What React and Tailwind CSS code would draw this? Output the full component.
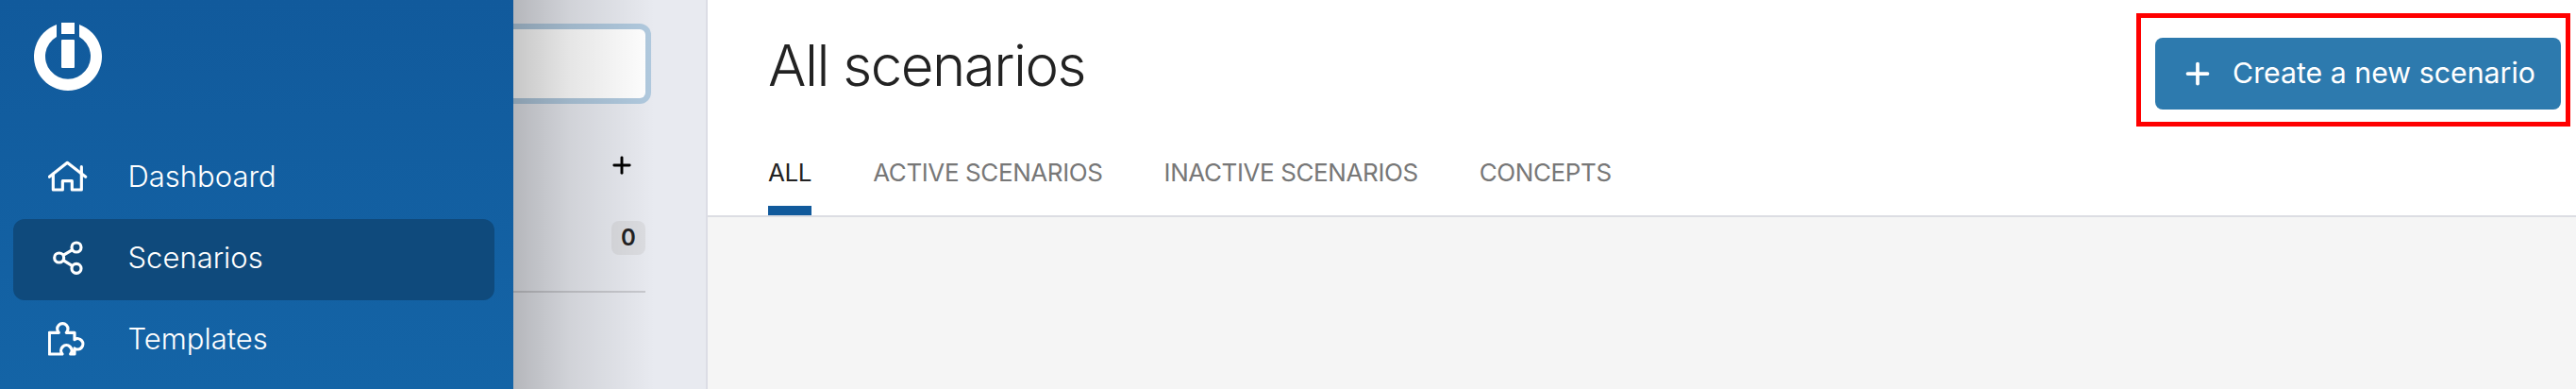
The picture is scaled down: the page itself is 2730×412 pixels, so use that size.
import React from "react";
import { Plus } from "lucide-react";

function Logo() {
  return (
    <svg width="72" height="72" viewBox="0 0 72 72" fill="#fff">
      <path
        fillRule="evenodd"
        d="M24 2A36 36 0 1 0 48 2V14.9A24 24 0 1 1 24 14.9Z"
      />
      <rect x="29" y="0" width="14" height="12" />
      <rect x="29" y="18" width="14" height="30" rx="1" />
    </svg>
  );
}

function HomeIcon() {
  return (
    <svg width="42" height="34" viewBox="66 65 126 102" fill="none" stroke="#fff" strokeWidth="9.5" strokeLinejoin="round" strokeLinecap="round">
      <path d="M70 117L127 72L185 117" />
      <path d="M172 85V158H142V130H112V158H82V107" />
    </svg>
  );
}

function ShareIcon() {
  return (
    <svg width="32" height="36" viewBox="80 319 96 108" fill="none" stroke="#fff" strokeWidth="9.5">
      <circle cx="155" cy="340" r="15" />
      <circle cx="100" cy="373" r="15" />
      <circle cx="155" cy="407" r="15" />
      <path d="M113 365L142 348M113 381L142 399" />
    </svg>
  );
}

function PuzzleIcon() {
  return (
    <svg width="42" height="36" viewBox="66 578 126 108" fill="none" stroke="#fff" strokeWidth="9.5" strokeLinejoin="round">
      <path d="M70 680V612H100A17 17 0 1 1 124 612H150V634A17 17 0 1 1 150 662V680H137A17 17 0 1 0 111 680H70Z" />
    </svg>
  );
}

const navItems = [
  { label: "Dashboard", icon: <HomeIcon /> },
  { label: "Scenarios", icon: <ShareIcon />, active: true },
  { label: "Templates", icon: <PuzzleIcon /> },
];

const tabs = ["All", "Active scenarios", "Inactive scenarios", "Concepts"];

function App() {
  return (
    <div className="flex h-[412px] w-[2730px] overflow-hidden bg-white font-['Inter',sans-serif]">
      <div className="w-[544px] shrink-0 bg-gradient-to-b from-[#115a9c] to-[#1464a6]">
        <div className="pl-9 pt-6">
          <Logo />
        </div>
        <div className="mt-[50px] flex flex-col">
          {navItems.map((item) => (
            <div
              key={item.label}
              className={`mx-[14px] flex h-[86px] w-[510px] items-center rounded-xl pb-1 text-[31px] font-light text-white ${
                item.active ? "bg-[#0f4a7c]" : ""
              }`}
            >
              <div className="mr-[5.5px] flex w-[116px] justify-center">{item.icon}</div>
              {item.label}
            </div>
          ))}
        </div>
      </div>

      <div className="relative w-[206px] shrink-0 border-r-2 border-[#dcdde5] bg-[#e8eaf0] pr-[58px] pt-[25px]">
        <div className="h-[85px] rounded-r-xl border-y-[6px] border-r-[6px] border-[#b0c9de] bg-white" />
        <div className="mr-1.5">
          <div className="mt-[51px] flex justify-end pr-[11px] text-black">
            <Plus size={28} strokeWidth={2.5} />
          </div>
          <div className="mt-[45px] flex justify-end">
            <div className="flex h-9 w-9 items-center justify-center rounded-lg bg-[#dcdde1] text-2xl font-semibold text-[#222]">
              0
            </div>
          </div>
          <div className="mt-[38px] h-0.5 bg-[#c8c9ce]" />
        </div>
        <div className="pointer-events-none absolute inset-y-0 left-0 w-[150px] bg-gradient-to-r from-black/[.22] via-black/10 via-40% to-transparent" />
      </div>

      <div className="flex min-w-0 flex-1 flex-col bg-[#f5f5f5]">
        <div className="flex h-[230px] justify-between border-b-2 border-[#dcdde3] bg-white pl-16 pr-1.5 pt-3.5">
          <div className="flex flex-col">
            <h1 className="mt-[19px] text-[60px] leading-[72px] font-light tracking-[-1.5px] text-[#222]">
              All scenarios
            </h1>
            <div className="mt-auto flex gap-[65px]">
              {tabs.map((tab, i) => (
                <div
                  key={tab}
                  className={`border-b-[10px] pb-5 text-[26px] leading-[30px] tracking-[-0.4px] uppercase ${
                    i === 0 ? "border-[#115a9c] text-[#222]" : "border-transparent text-[#777]"
                  }`}
                >
                  {tab}
                </div>
              ))}
            </div>
          </div>
          <div className="h-[120px] border-[5px] border-[#ff0000] pb-[13px] pl-[15px] pr-[5px] pt-[21px]">
            <button className="flex h-[76px] w-[430px] items-center rounded-lg bg-[#2d7aae] pl-[27px] text-[30.3px] text-white">
              <Plus size={36} strokeWidth={2.5} className="mr-[19px]" />
              Create a new scenario
            </button>
          </div>
        </div>
        <div className="flex-1" />
      </div>
    </div>
  );
}

export default App;
